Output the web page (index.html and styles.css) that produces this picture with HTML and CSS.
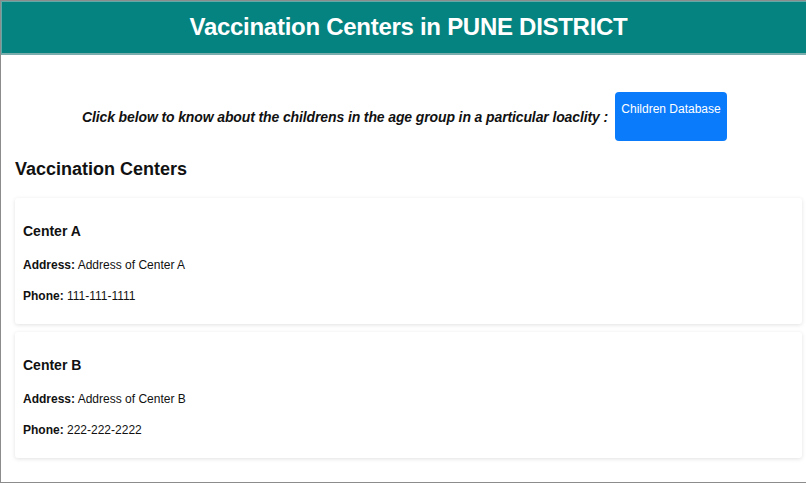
FILE: index.html
```html
<!DOCTYPE html>
<html>
<head>
<meta charset="utf-8">
<link rel="stylesheet" href="styles.css">
</head>
<body>
<div class="frame">
  <header class="header">
    <h1 class="title">Vaccination Centers in PUNE DISTRICT</h1>
  </header>
  <main class="content">
    <div class="intro">
      <p class="intro-text">Click below to know about the childrens in the age group in a particular loaclity :</p>
      <a class="btn">Children Database</a>
    </div>
    <h2 class="section-title">Vaccination Centers</h2>
    <div class="card">
      <h3 class="card-title">Center A</h3>
      <p class="card-line"><b>Address:</b> Address of Center A</p>
      <p class="card-line"><b>Phone:</b> 111-111-1111</p>
    </div>
    <div class="card">
      <h3 class="card-title">Center B</h3>
      <p class="card-line"><b>Address:</b> Address of Center B</p>
      <p class="card-line"><b>Phone:</b> 222-222-2222</p>
    </div>
  </main>
</div>
</body>
</html>
```
FILE: styles.css
```css
html, body {
  margin: 0;
  padding: 0;
  background: #ffffff;
}
body {
  font-family: "Liberation Sans", Arial, sans-serif;
  color: #111;
}
.frame {
  width: 806px;
  height: 483px;
  box-sizing: border-box;
  border: 1px solid #8c8c8c;
  border-right: none;
  overflow: hidden;
}
.header {
  background: #048380;
  height: 54px;
  box-sizing: border-box;
  padding-left: 9px;
  border-top: 1px solid #5fa9a6;
  border-left: 1px solid #5fa9a6;
  border-bottom: 2px solid #79aeac;
  display: flex;
  align-items: center;
  justify-content: center;
}
.title {
  margin: 0;
  color: #fff;
  font-size: 24px;
  letter-spacing: -0.28px;
  font-weight: bold;
  padding-bottom: 1px;
}
.content {
  padding: 0 4px 0 14px;
}
.intro {
  display: flex;
  justify-content: center;
  align-items: center;
  gap: 7px;
  margin-top: 37px;
  padding-right: 8px;
}
.intro-text {
  margin: 0;
  font-size: 14px;
  letter-spacing: -0.12px;
  font-weight: bold;
  font-style: italic;
}
.btn {
  display: block;
  width: 112px;
  height: 49px;
  box-sizing: border-box;
  padding: 10px 4px 0;
  background: #0a7bfb;
  color: #fff;
  font-size: 12px;
  white-space: nowrap;
  border-radius: 4px;
  text-align: center;
}
.section-title {
  margin: 18px 0 18px;
  font-size: 18px;
  font-weight: bold;
}
.card {
  background: #fff;
  box-shadow: 0 1px 4px rgba(0, 0, 0, 0.12);
  border-radius: 3px;
  padding: 10px 8px 4px;
  margin-bottom: 8px;
}
.card-title {
  margin: 15px 0 17px;
  font-size: 14px;
  line-height: 17px;
}
.card-line {
  margin: 16px 0;
  font-size: 12px;
  line-height: 15px;
}
.card-title + .card-line {
  margin-top: 18px;
}
```
